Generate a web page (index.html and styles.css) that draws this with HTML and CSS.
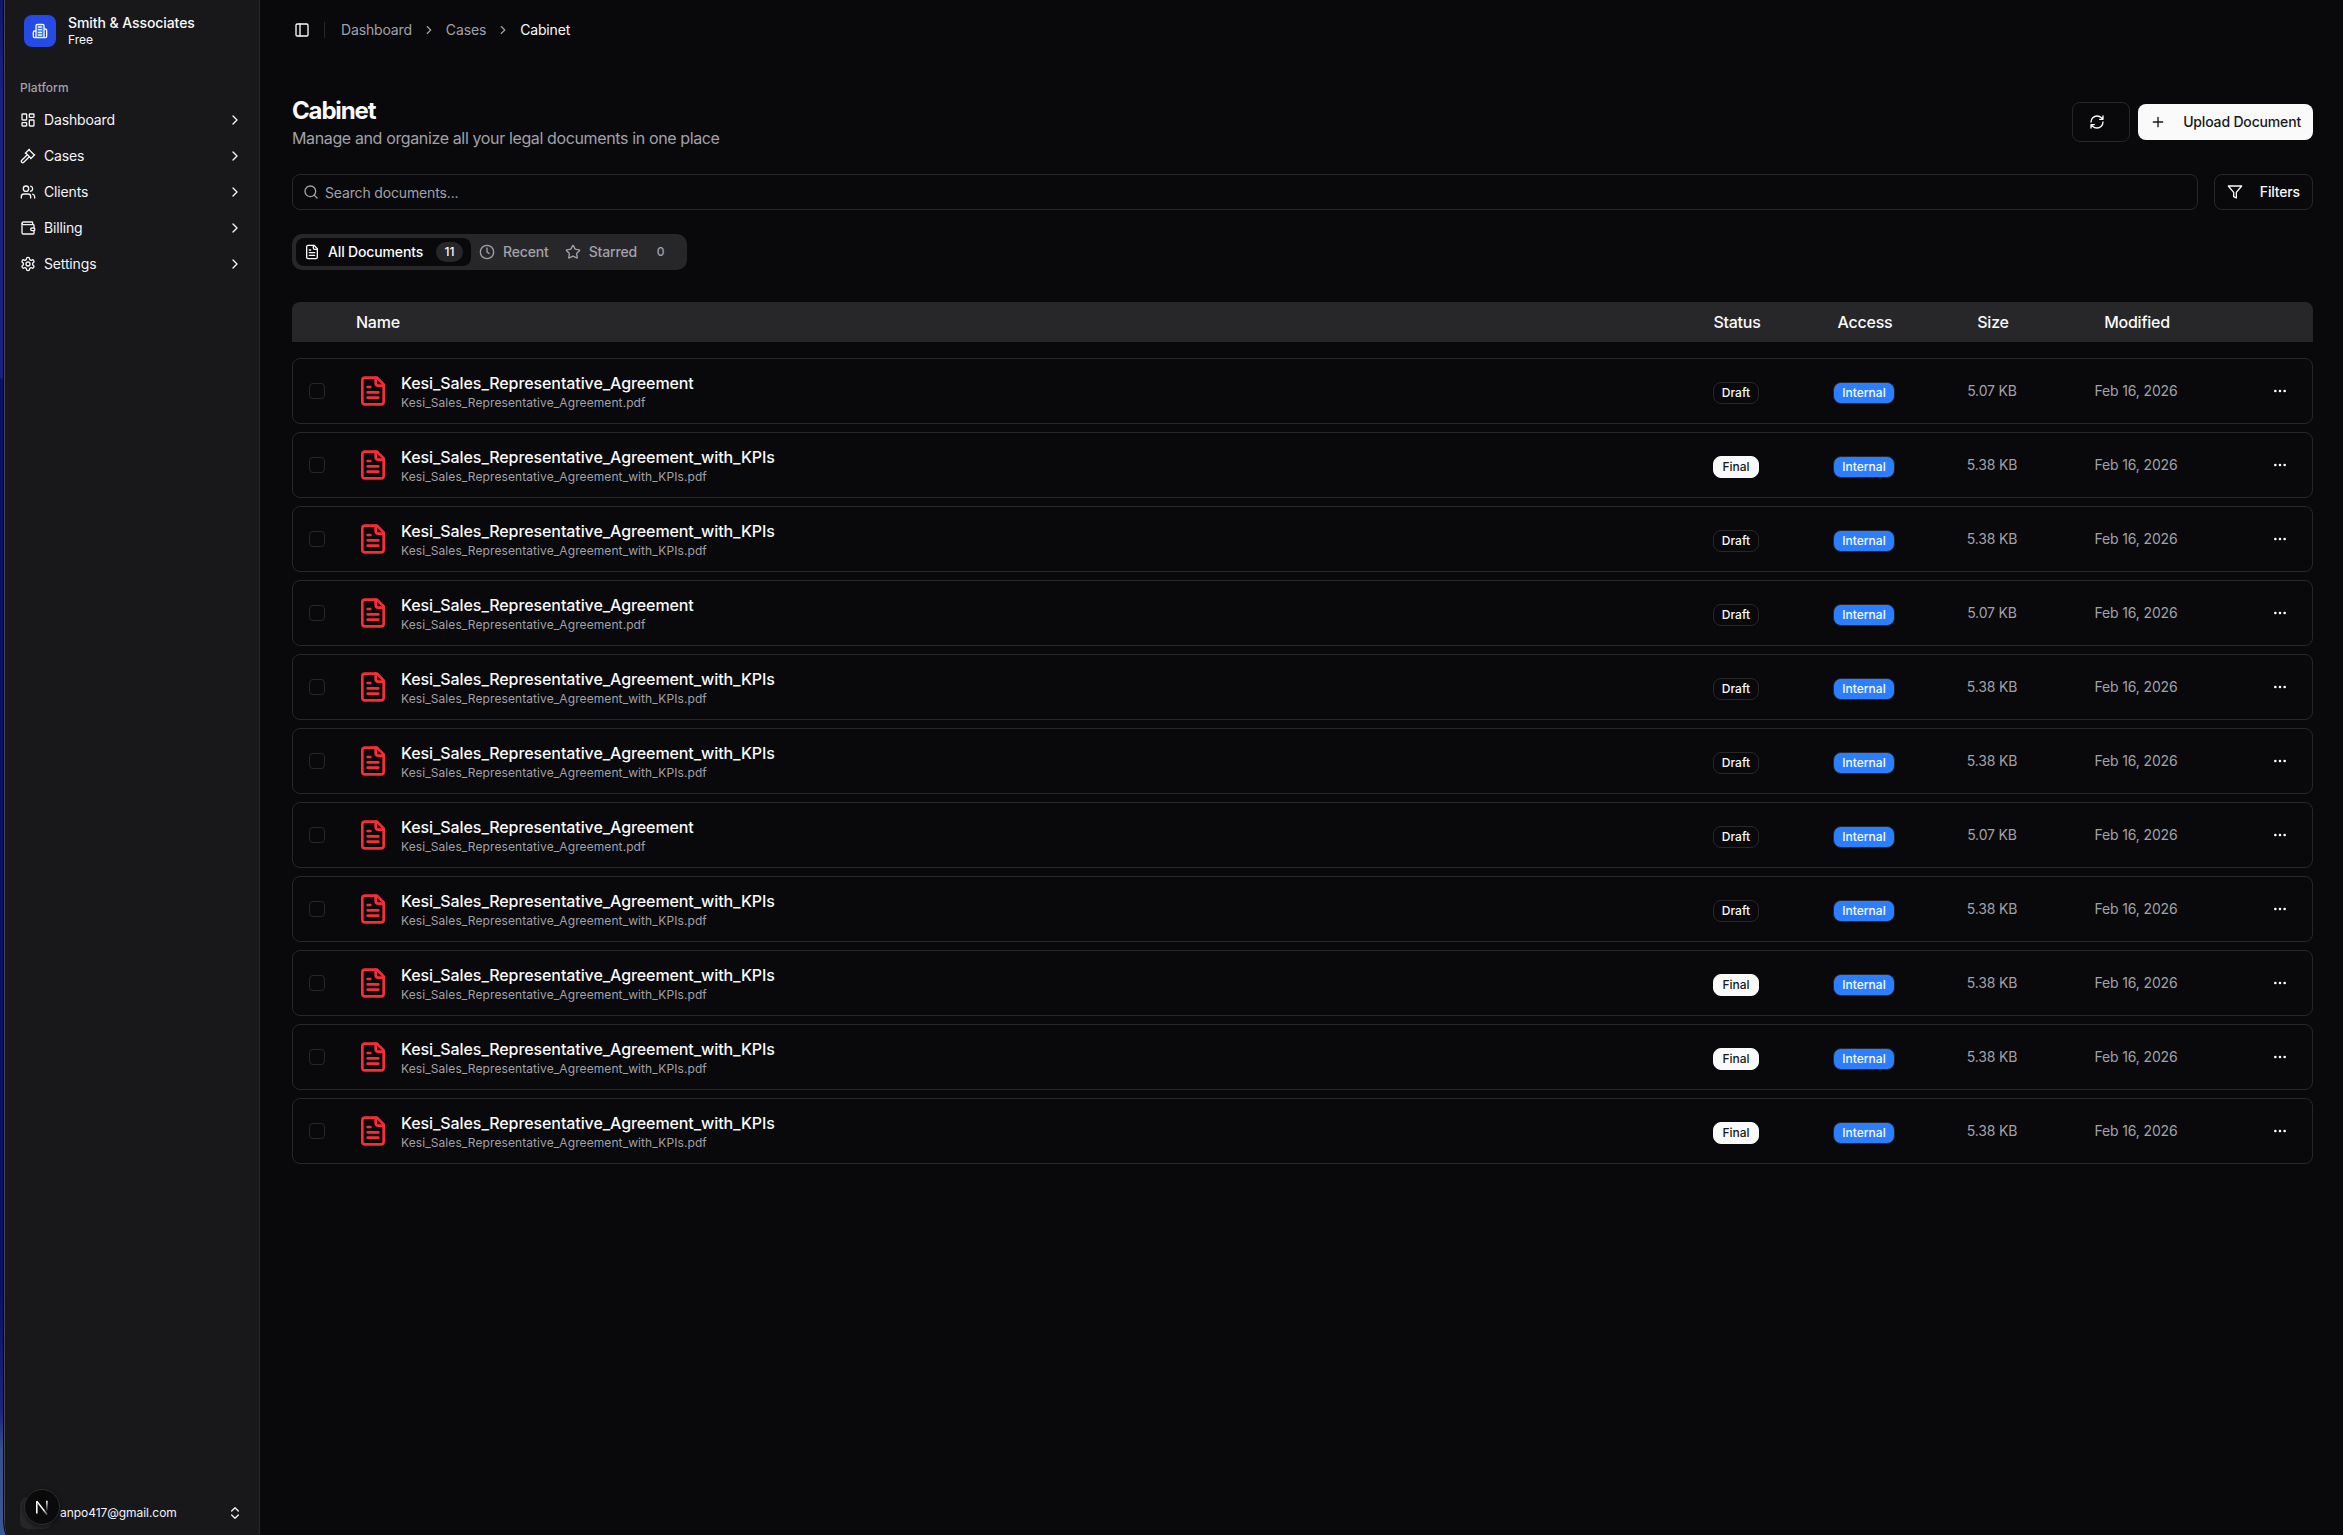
FILE: index.html
```html
<!DOCTYPE html>
<html lang="en">
<head>
<meta charset="utf-8">
<title>Cabinet</title>
<link rel="stylesheet" href="styles.css">
</head>
<body>
<svg width="0" height="0" class="sprite">
  <symbol id="chev" viewBox="0 0 24 24"><path d="m9 18 6-6-6-6"/></symbol>
  <symbol id="file" viewBox="0 0 24 24"><path d="M15 2H6a2 2 0 0 0-2 2v16a2 2 0 0 0 2 2h12a2 2 0 0 0 2-2V7Z"/><path d="M14 2v4a2 2 0 0 0 2 2h4M10 9H8M16 13H8M16 17H8"/></symbol>
  <symbol id="dots" viewBox="0 0 24 24"><circle cx="12" cy="12" r="1"/><circle cx="19" cy="12" r="1"/><circle cx="5" cy="12" r="1"/></symbol>
</svg>
<div class="desktop">
<div class="window">
  <aside class="sidebar">
    <div class="org">
      <div class="logo"><svg viewBox="0 0 24 24"><rect class="tower" x="7" y="3" width="10" height="18"/><path d="M6 22V4a2 2 0 0 1 2-2h8a2 2 0 0 1 2 2v18ZM6 12H4a2 2 0 0 0-2 2v6a2 2 0 0 0 2 2h2M18 9h2a2 2 0 0 1 2 2v9a2 2 0 0 1-2 2h-2M10 6h4M10 10h4M10 14h4M10 18h4"/></svg></div>
      <div><div class="org-name">Smith &amp; Associates</div><div class="org-plan">Free</div></div>
    </div>
    <div class="group">Platform</div>
    <nav>
      <a><svg viewBox="0 0 24 24"><rect width="7" height="9" x="3" y="3" rx="1"/><rect width="7" height="5" x="14" y="3" rx="1"/><rect width="7" height="9" x="14" y="12" rx="1"/><rect width="7" height="5" x="3" y="16" rx="1"/></svg><span>Dashboard</span><svg><use href="#chev"/></svg></a>
      <a><svg viewBox="0 0 24 24"><path d="m14 13-8.381 8.38a1 1 0 0 1-3.001-3l8.384-8.381M16 16l6-6M21.500 10.500l-8-8M8 8l6-6M8.500 7.500l8 8"/></svg><span>Cases</span><svg><use href="#chev"/></svg></a>
      <a><svg viewBox="0 0 24 24"><path d="M16 21v-2a4 4 0 0 0-4-4H6a4 4 0 0 0-4 4v2"/><circle cx="9" cy="7" r="4"/><path d="M22 21v-2a4 4 0 0 0-3-3.870M16 3.130a4 4 0 0 1 0 7.750"/></svg><span>Clients</span><svg><use href="#chev"/></svg></a>
      <a><svg viewBox="0 0 24 24"><path d="M19 7V4a1 1 0 0 0-1-1H5a2 2 0 0 0 0 4h15a1 1 0 0 1 1 1v4h-3a2 2 0 0 0 0 4h3a1 1 0 0 0 1-1v-2a1 1 0 0 0-1-1"/><path d="M3 5v14a2 2 0 0 0 2 2h15a1 1 0 0 0 1-1v-4"/></svg><span>Billing</span><svg><use href="#chev"/></svg></a>
      <a><svg viewBox="0 0 24 24"><path d="M12.220 2h-.440a2 2 0 0 0-2 2v.180a2 2 0 0 1-1 1.730l-.430.250a2 2 0 0 1-2 0l-.150-.080a2 2 0 0 0-2.730.730l-.220.380a2 2 0 0 0 .730 2.730l.150.100a2 2 0 0 1 1 1.720v.510a2 2 0 0 1-1 1.740l-.150.090a2 2 0 0 0-.730 2.730l.220.380a2 2 0 0 0 2.730.730l.150-.080a2 2 0 0 1 2 0l.430.250a2 2 0 0 1 1 1.730V20a2 2 0 0 0 2 2h.440a2 2 0 0 0 2-2v-.180a2 2 0 0 1 1-1.730l.430-.250a2 2 0 0 1 2 0l.150.080a2 2 0 0 0 2.730-.730l.220-.390a2 2 0 0 0-.730-2.730l-.150-.080a2 2 0 0 1-1-1.740v-.500a2 2 0 0 1 1-1.740l.150-.090a2 2 0 0 0 .730-2.730l-.220-.380a2 2 0 0 0-2.730-.730l-.150.080a2 2 0 0 1-2 0l-.430-.250a2 2 0 0 1-1-1.730V4a2 2 0 0 0-2-2z"/><circle cx="12" cy="12" r="3"/></svg><span>Settings</span><svg><use href="#chev"/></svg></a>
    </nav>
    <div class="user">
      <div class="avatar"></div><span>anpo417@gmail.com</span>
      <svg viewBox="0 0 24 24"><path d="m7 15 5 5 5-5M7 9l5-5 5 5"/></svg>
      <div class="devtool"><svg viewBox="0 0 40 40"><defs><linearGradient id="n1" gradientUnits="userSpaceOnUse" x1="23" y1="24" x2="30" y2="34"><stop stop-color="#fff"/><stop offset="1" stop-color="#fff" stop-opacity="0"/></linearGradient><linearGradient id="n2" gradientUnits="userSpaceOnUse" x1="0" y1="11" x2="0" y2="27"><stop stop-color="#fff"/><stop offset="1" stop-color="#fff" stop-opacity="0"/></linearGradient></defs><path stroke="#fff" d="M12 30V11"/><path stroke="url(#n1)" d="M12 11 28 32"/><path stroke="url(#n2)" d="M27.500 10.500V28"/></svg></div>
    </div>
  </aside>
  <main>
    <header class="crumbs">
      <svg viewBox="0 0 24 24"><rect width="18" height="18" x="3" y="3" rx="2"/><path d="M9 3v18"/></svg><i></i>
      <span>Dashboard</span><svg class="sep"><use href="#chev"/></svg><span>Cases</span><svg class="sep"><use href="#chev"/></svg><b>Cabinet</b>
    </header>
    <div class="title">
      <div><h1>Cabinet</h1><p>Manage and organize all your legal documents in one place</p></div>
      <button class="refresh"><svg viewBox="0 0 24 24"><path d="M3 12a9 9 0 0 1 9-9 9.750 9.750 0 0 1 6.740 2.740L21 8M21 3v5h-5M21 12a9 9 0 0 1-9 9 9.750 9.750 0 0 1-6.740-2.740L3 16M8 16H3v5"/></svg></button>
      <button class="upload"><svg viewBox="0 0 24 24"><path d="M5 12h14M12 5v14"/></svg>Upload Document</button>
    </div>
    <div class="tools">
      <div class="search"><svg viewBox="0 0 24 24"><circle cx="11" cy="11" r="8"/><path d="m21 21-4.300-4.300"/></svg><span>Search documents...</span></div>
      <button class="filters"><svg viewBox="0 0 24 24"><path d="M22 3H2l8 9.460V19l4 2v-8.540L22 3z"/></svg>Filters</button>
    </div>
    <div class="tabs">
      <div class="tab active"><svg><use href="#file"/></svg>All Documents<em>11</em></div>
      <div class="tab"><svg viewBox="0 0 24 24"><circle cx="12" cy="12" r="10"/><path d="M12 6v6l3 2"/></svg>Recent</div>
      <div class="tab"><svg viewBox="0 0 24 24"><path d="M11.525 2.295a.530.530 0 0 1 .950 0l2.310 4.679a2.123 2.123 0 0 0 1.595 1.160l5.166.756a.530.530 0 0 1 .294.904l-3.736 3.638a2.123 2.123 0 0 0-.611 1.878l.882 5.140a.530.530 0 0 1-.771.560l-4.618-2.428a2.122 2.122 0 0 0-1.973 0L6.396 21.010a.530.530 0 0 1-.770-.560l.881-5.139a2.122 2.122 0 0 0-.611-1.879L2.160 9.795a.530.530 0 0 1 .294-.906l5.165-.755a2.122 2.122 0 0 0 1.597-1.160z"/></svg>Starred<em>0</em></div>
    </div>
    <div class="row head"><span></span><span>Name</span><span>Status</span><span>Access</span><span>Size</span><span>Modified</span><span></span></div>
    <div class="list" id="list"></div>
  </main>
</div>
</div>
<script src="list.js"></script>
</body>
</html>
```
FILE: list.js
```js
const base = 'Kesi_Sales_Representative_Agreement';
const kpis = base + '_with_KPIs';
const docs = [
  [base, 'Draft', '5.07 KB'], [kpis, 'Final', '5.38 KB'], [kpis, 'Draft', '5.38 KB'],
  [base, 'Draft', '5.07 KB'], [kpis, 'Draft', '5.38 KB'], [kpis, 'Draft', '5.38 KB'],
  [base, 'Draft', '5.07 KB'], [kpis, 'Draft', '5.38 KB'], [kpis, 'Final', '5.38 KB'],
  [kpis, 'Final', '5.38 KB'], [kpis, 'Final', '5.38 KB']
];
document.getElementById('list').innerHTML = docs.map(([name, status, size]) => `
  <div class="row doc">
    <span class="check"></span>
    <div class="name"><svg><use href="#file"/></svg><div><div class="doc-title">${name}</div><div class="doc-file">${name}.pdf</div></div></div>
    <span class="cell"><span class="badge ${status.toLowerCase()}">${status}</span></span>
    <span class="cell"><span class="badge internal">Internal</span></span>
    <span class="meta">${size}</span>
    <span class="meta">Feb 16, 2026</span>
    <span class="more"><svg><use href="#dots"/></svg></span>
  </div>`).join('');
```
FILE: styles.css
```css
* { box-sizing: border-box; }
body { margin: 0; background: #09090b; font: 14px/20px Inter, "Liberation Sans", sans-serif; letter-spacing: -0.150px; color: #fafafa; }
.sprite { display: block; position: absolute; }
svg { width: 16px; height: 16px; fill: none; stroke: currentColor; stroke-width: 2; stroke-linecap: round; stroke-linejoin: round; flex: none; }
button { font: 500 14px/20px Inter, sans-serif; letter-spacing: -0.170px; color: #fafafa; background: transparent; border: 1px solid #27272a; border-radius: 8px; display: flex; align-items: center; }
h1, p { margin: 0; }

.desktop { height: 1535px; padding-left: 4px; background: linear-gradient(180deg, #10166c 0, #1a1f85 90px, #1a1f85 378px, #0a1068 379px, #0a1068 1290px, #1c2380 1410px, #34508e 1450px, #3a5896 1535px); }
.window { display: flex; height: 1535px; border-left: 1px solid #47474a; box-shadow: -1px 0 #05051a; background: #09090b; border-bottom-left-radius: 4px 16px; overflow: hidden; }

.sidebar { width: 255px; flex: none; background: #18181b; border-right: 1px solid #27272a; display: flex; flex-direction: column; }
.org { display: flex; gap: 12px; padding: 13px 0 0 19px; height: 70px; }
.org > div:last-child { padding-top: 1px; }
.logo { width: 32px; height: 32px; margin-top: 2px; border-radius: 8px; background: #264ae5; display: grid; place-items: center; }
.tower { fill: #3b82f6; stroke: none; }
.org-name { font-weight: 500; line-height: 18px; letter-spacing: -0.080px; }
.org-plan { font-size: 12px; line-height: 16px; letter-spacing: 0; }
.group { height: 34px; padding: 10px 15px; font-size: 12px; line-height: 16px; font-weight: 500; letter-spacing: 0.050px; color: #a1a1aa; }
nav { display: flex; flex-direction: column; gap: 4px; }
nav a { height: 32px; display: flex; align-items: center; gap: 8px; padding: 0 16px 0 15px; color: #f4f4f5; }
nav span { flex: 1; }
.user { margin-top: auto; position: relative; display: flex; align-items: center; height: 45px; padding: 0 16px 0 15px; font-size: 12px; letter-spacing: -0.050px; color: #f4f4f5; }
.user > svg { margin-left: auto; }
.avatar { width: 32px; height: 32px; border-radius: 8px; background: #27272a; margin-right: 8px; }
.devtool { position: absolute; left: 19px; top: -1px; width: 36px; height: 36px; border-radius: 50%; background: #0a0a0a; border: 1px solid #303033; display: grid; place-items: center; box-shadow: 0 2px 4px #0008; }
.devtool svg { width: 26px; height: 26px; stroke-width: 2.400; stroke-linecap: butt; }

main { flex: 1; padding: 0 30px 0 32px; }
.crumbs { height: 60px; display: flex; align-items: center; gap: 10px; color: #a1a1aa; padding-left: 2px; }
.crumbs b { font-weight: 400; color: #fafafa; }
.crumbs > svg:first-child { color: #fafafa; }
.crumbs i { width: 1px; height: 16px; background: #27272a; margin: 0 6px 0 4px; }
.crumbs .sep { width: 14px; height: 14px; }
.title { display: flex; align-items: center; height: 56px; margin-top: 34px; }
.title > div { flex: 1; }
h1 { font-size: 24px; line-height: 32px; font-weight: 700; letter-spacing: -1.150px; padding-top: 1px; height: 32px; }
p { font-size: 16px; line-height: 24px; color: #a1a1aa; letter-spacing: -0.370px; }
.refresh { width: 58px; height: 40px; padding: 0 0 0 16px; margin-right: 8px; }
.upload { width: 175px; height: 36px; background: #fafafa; color: #18181b; border: 0; padding: 0 12px; justify-content: space-between; }
.tools { display: flex; gap: 16px; height: 36px; margin-top: 24px; }
.search { flex: 1; border: 1px solid #27272a; border-radius: 8px; display: flex; align-items: center; gap: 6px; padding-left: 10px; color: #a1a1aa; }
.search span { padding-top: 1px; }
.filters { width: 99px; padding: 0 12px; justify-content: space-between; }
.tabs { display: flex; width: 395px; height: 36px; padding: 4px; margin-top: 24px; background: #27272a; border-radius: 10px; }
.tab { display: flex; align-items: center; padding: 0 8px; font-weight: 500; color: #a1a1aa; white-space: nowrap; }
.tab svg { margin-right: 8px; }
.tab.active { width: 175px; background: #09090b; color: #fafafa; border-radius: 8px; }
.tab em { font: 500 12px/20px Inter, sans-serif; letter-spacing: 0; height: 20px; min-width: 27px; padding: 0 8px; margin-left: auto; border-radius: 10px; background: #27272a; text-align: center; }
.tab:last-child em { margin-left: 10px; }

.row { display: grid; grid-template-columns: 48px 1fr 128px 128px 128px 160px 80px; align-items: center; }
.row > span { text-align: center; }
.head { height: 40px; margin-top: 32px; padding: 0 16px; border-radius: 8px 8px 0 0; background: #27272a; font-size: 16px; font-weight: 500; letter-spacing: -0.250px; }
.head > span:nth-child(2) { text-align: left; }
.list { display: flex; flex-direction: column; gap: 8px; margin-top: 16px; }
.doc { height: 66px; padding: 0 16px; border: 1px solid #27272a; border-radius: 8px; }
.row > .check { width: 16px; height: 16px; border: 1px solid #27272a; border-radius: 4px; }
.name { display: flex; align-items: center; gap: 12px; }
.name svg { width: 32px; height: 32px; color: #fb2c36; }
.doc-title { font-size: 16px; line-height: 24px; font-weight: 500; letter-spacing: -0.090px; }
.doc-file { font-size: 12px; line-height: 16px; color: #a1a1aa; letter-spacing: 0.090px; }
.cell { padding-top: 4px; }
.badge { display: inline-block; font-size: 12px; line-height: 16px; font-weight: 500; letter-spacing: 0; padding: 2px 8px; border: 1px solid #27272a; border-radius: 8px; vertical-align: middle; }
.badge.final { background: #fafafa; color: #18181b; border-color: #fafafa; }
.badge.internal { background: #2b7fff; }
.meta { color: #a1a1aa; }
.more { display: flex; justify-content: flex-end; padding-right: 8px; }
```
